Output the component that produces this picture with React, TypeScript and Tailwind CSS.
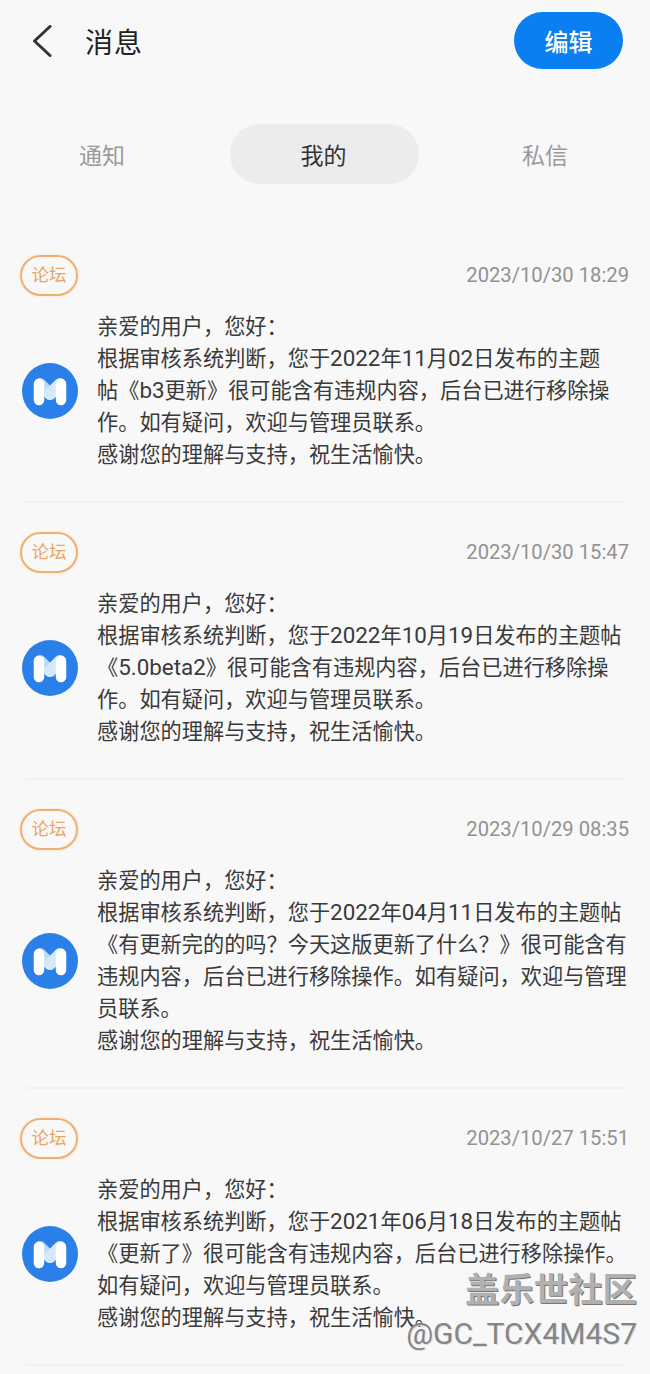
const GREETING = "亲爱的用户，您好：";
const THANKS = "感谢您的理解与支持，祝生活愉快。";

const MESSAGES = [
  {
    date: "2023/10/30 18:29",
    lines: [
      "根据审核系统判断，您于2022年11月02日发布的主题",
      "帖《b3更新》很可能含有违规内容，后台已进行移除操",
      "作。如有疑问，欢迎与管理员联系。",
    ],
  },
  {
    date: "2023/10/30 15:47",
    lines: [
      "根据审核系统判断，您于2022年10月19日发布的主题帖",
      "《5.0beta2》很可能含有违规内容，后台已进行移除操",
      "作。如有疑问，欢迎与管理员联系。",
    ],
  },
  {
    date: "2023/10/29 08:35",
    lines: [
      "根据审核系统判断，您于2022年04月11日发布的主题帖",
      "《有更新完的的吗？今天这版更新了什么？》很可能含有",
      "违规内容，后台已进行移除操作。如有疑问，欢迎与管理",
      "员联系。",
    ],
  },
  {
    date: "2023/10/27 15:51",
    lines: [
      "根据审核系统判断，您于2021年06月18日发布的主题帖",
      "《更新了》很可能含有违规内容，后台已进行移除操作。",
      "如有疑问，欢迎与管理员联系。",
    ],
  },
];

function Logo() {
  return (
    <svg viewBox="0 0 56 56" className="h-14 w-14 shrink-0">
      <circle cx="28" cy="28" r="28" fill="#2b7fe8" />
      <path d="M18 21 L28 31" fill="none" stroke="#b9dbf7" strokeWidth="12" strokeLinecap="round" />
      <path d="M38 21 L28 31" fill="none" stroke="#d6e9fb" strokeWidth="12" strokeLinecap="round" />
      <path d="M17 21 V37 M39 21 V37" fill="none" stroke="#fff" strokeWidth="10.5" strokeLinecap="round" />
    </svg>
  );
}

// digits and latin run a bit wider than the CJK in the reference
function Line({ text }: { text: string }) {
  return (
    <p>
      {text.split(/([A-Za-z0-9.]+)/).map((part, i) =>
        i % 2 === 1 ? (
          <span key={i} className="text-[22.4px] leading-none">
            {part}
          </span>
        ) : (
          part
        ),
      )}
    </p>
  );
}

function Message({ date, lines }: { date: string; lines: string[] }) {
  return (
    <div className="px-5">
      <div className="pt-[29px] pb-[30px] pr-1">
        <div className="flex items-center justify-between">
          <span className="flex h-[41px] w-[58px] items-center justify-center rounded-full border-2 border-[#eeb070] text-[17.5px] text-[#e9a565] shadow-[0_0_3px_#f8dcc0]">
            论坛
          </span>
          <span className="-mr-[3px] font-['Roboto'] text-[20.2px] text-[#929292]">{date}</span>
        </div>
        <div className="mt-[15px] flex items-center">
          <div className="ml-[2px]">
            <Logo />
          </div>
          <div className="ml-[19px] text-[21.2px] leading-8 whitespace-nowrap text-[#3a3a3a]">
            <Line text={GREETING} />
            {lines.map((l) => (
              <Line key={l} text={l} />
            ))}
            <Line text={THANKS} />
          </div>
        </div>
      </div>
      <div className="mx-[5px] h-[2px] bg-[#f2f2f2]" />
    </div>
  );
}

export default function App() {
  return (
    <div className="relative h-[1374px] w-[650px] overflow-hidden bg-[#f8f8f8] font-['Roboto','Noto_Sans_CJK_SC',sans-serif]">
      <div className="flex items-center pt-3 pr-[27px] pl-[32px]">
        <svg viewBox="0 0 20 32" className="h-8 w-5 text-[#333]">
          <path d="M18 1.5 L2.5 16 L18 30.5" fill="none" stroke="currentColor" strokeWidth="3" strokeLinecap="round" strokeLinejoin="round" />
        </svg>
        <h1 className="ml-[33px] pt-[7px] text-[28px] tracking-[1px] text-[#222]">消息</h1>
        <button className="ml-auto h-[57px] w-[109px] rounded-full bg-[#0a7ff2] pt-[4px] text-[24px] font-medium text-white">
          编辑
        </button>
      </div>
      <div className="mt-[55px] flex items-center">
        <span className="ml-[79px] pt-[6px] text-[23px] text-[#9a9a9a]">通知</span>
        <span className="ml-[105px] flex h-[60px] w-[189px] items-center justify-center rounded-full bg-[#ececec] pt-[6px] pr-[2px] text-[23px] text-[#333]">
          我的
        </span>
        <span className="ml-[103px] pt-[6px] text-[23px] text-[#9a9a9a]">私信</span>
      </div>
      <div className="mt-[42px]">
        {MESSAGES.map((m) => (
          <Message key={m.date} {...m} />
        ))}
      </div>
      <div className="absolute right-[13px] bottom-[18px] flex flex-col items-end">
        <span className="text-[34.4px] leading-[44px] font-bold text-[#b0b0b0] [text-shadow:1px_1px_0_#777]">盖乐世社区</span>
        <span className="font-['Roboto'] text-[30px] leading-[44px] text-[#858585] [text-shadow:1px_1px_0_#ddd]">@GC_TCX4M4S7</span>
      </div>
    </div>
  );
}
